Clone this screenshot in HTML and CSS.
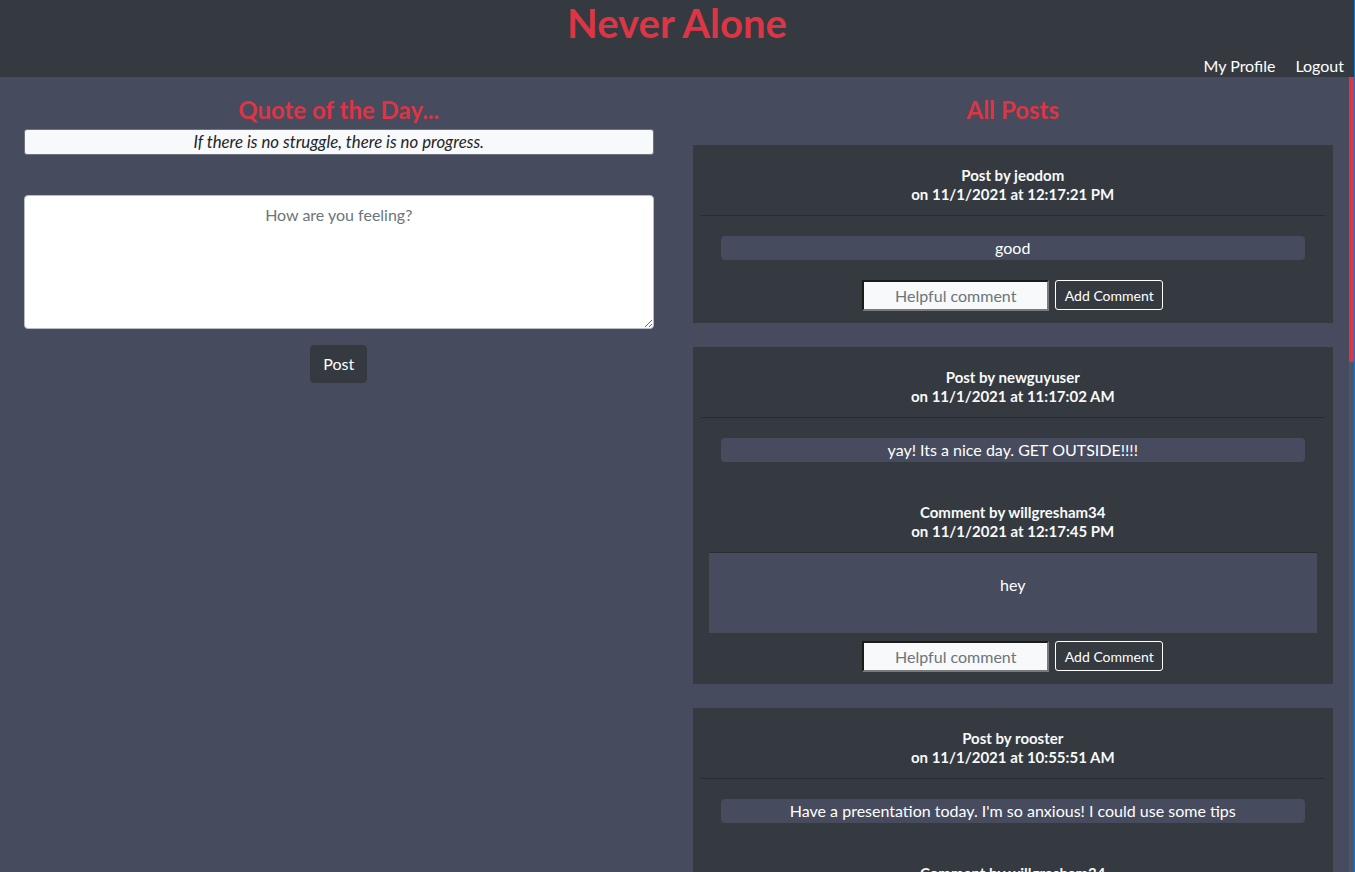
FILE: index.html
```html
<!DOCTYPE html>
<html lang="en">
<head>
<meta charset="utf-8">
<title>Never Alone</title>
<link rel="stylesheet" href="styles.css">
</head>
<body>
<header class="site-header">
  <h1 class="brand">Never Alone</h1>
  <nav class="nav">
    <a class="nav-link" href="#">My Profile</a>
    <a class="nav-link" href="#">Logout</a>
  </nav>
</header>
<div class="content-area">
<main class="main">
  <section class="col col-left">
    <h2 class="section-title">Quote of the Day...</h2>
    <div class="quote">If there is no struggle, there is no progress.</div>
    <form class="new-post">
      <textarea class="feeling" placeholder="How are you feeling?"></textarea>
      <button type="button" class="btn-post">Post</button>
    </form>
  </section>
  <section class="col col-right">
    <h2 class="section-title">All Posts</h2>
    <div class="posts">
      <article class="card">
        <div class="card-head">Post by jeodom<br>on 11/1/2021 at 12:17:21 PM</div>
        <div class="card-body">
          <p class="pill">good</p>
          <div class="comment-form">
            <input class="comment-input" type="text" placeholder="Helpful comment">
            <button type="button" class="btn-comment">Add Comment</button>
          </div>
        </div>
      </article>

      <article class="card">
        <div class="card-head">Post by newguyuser<br>on 11/1/2021 at 11:17:02 AM</div>
        <div class="card-body">
          <p class="pill">yay! Its a nice day. GET OUTSIDE!!!!</p>
          <div class="comment">
            <div class="comment-head">Comment by willgresham34<br>on 11/1/2021 at 12:17:45 PM</div>
            <div class="comment-box">hey</div>
          </div>
          <div class="comment-form">
            <input class="comment-input" type="text" placeholder="Helpful comment">
            <button type="button" class="btn-comment">Add Comment</button>
          </div>
        </div>
      </article>

      <article class="card">
        <div class="card-head">Post by rooster<br>on 11/1/2021 at 10:55:51 AM</div>
        <div class="card-body">
          <p class="pill">Have a presentation today. I'm so anxious! I could use some tips</p>
          <div class="comment">
            <div class="comment-head">Comment by willgresham34<br>on 11/1/2021 at 11:02:13 AM</div>
            <div class="comment-box">Take a deep breath and practice once more out loud. You've got this!</div>
          </div>
          <div class="comment-form">
            <input class="comment-input" type="text" placeholder="Helpful comment">
            <button type="button" class="btn-comment">Add Comment</button>
          </div>
        </div>
      </article>
    </div>
  </section>
</main>
<div class="scrollbar"><div class="scrollbar-thumb"></div></div>
</div>
</body>
</html>
```

FILE: styles.css
```css
* { box-sizing: border-box; }

html, body {
  height: 100%;
}

body {
  margin: 0;
  font-family: "Lato", "Open Sans", sans-serif;
  font-size: 16px;
  color: #ffffff;
  background: #464b5e;
  display: flex;
  flex-direction: column;
  overflow: hidden;
  border-right: 1px solid #0a78d4;
}

.site-header {
  background: #343a40;
  height: 77px;
  flex: none;
  display: flex;
  flex-direction: column;
}

.brand {
  margin: 0;
  text-align: center;
  color: #dc3545;
  font-size: 40px;
  font-weight: 700;
  line-height: 47px;
}

.nav {
  display: flex;
  justify-content: flex-end;
  gap: 20px;
  padding: 8px 10px 0 0;
  line-height: 22px;
}

.nav-link {
  color: #ffffff;
  text-decoration: none;
  font-size: 16px;
}

.content-area {
  flex: 1;
  min-height: 0;
  display: flex;
}

.main {
  flex: 1;
  min-width: 0;
  overflow: hidden;
  display: grid;
  grid-template-columns: 1fr 1fr;
  align-items: start;
}

.scrollbar {
  flex: none;
  width: 5px;
  background: #4f5467;
}

.scrollbar-thumb {
  height: 285px;
  background: #dc3545;
}

.col-left {
  padding: 18px 21px 0 24px;
}

.col-right {
  padding: 18px 16px 8px 18px;
}

.section-title {
  margin: 0;
  text-align: center;
  color: #dc3545;
  font-size: 24px;
  font-weight: 700;
  line-height: 29px;
}

.quote {
  margin-top: 5px;
  height: 26px;
  line-height: 24px;
  background: #f8f9fa;
  color: #212529;
  border: 1px solid #6c757d;
  border-radius: 3px;
  font-style: italic;
  font-size: 16.8px;
  text-align: center;
}

.new-post {
  display: flex;
  flex-direction: column;
  align-items: center;
  margin-top: 40px;
}

.feeling {
  width: 100%;
  height: 134px;
  border: 1px solid #b8bcc4;
  border-radius: 4px;
  padding: 7px 12px;
  font-family: inherit;
  font-size: 16px;
  line-height: 24px;
  text-align: center;
  color: #212529;
  background: #ffffff;
}
.feeling::placeholder {
  color: #6c757d;
}

.btn-post {
  margin-top: 16px;
  background: #343a40;
  color: #ffffff;
  border: 1px solid #343a40;
  border-radius: 4px;
  padding: 6px 12px;
  font-family: inherit;
  font-size: 16px;
  line-height: 24px;
}

.posts {
  margin-top: 21px;
  display: flex;
  flex-direction: column;
  gap: 24px;
}

.card {
  background: #343a40;
  padding: 0 8px 12px;
}

.card-head,
.comment-head {
  text-align: center;
  font-weight: 700;
  font-size: 15px;
  line-height: 19px;
  color: #f8f9fa;
}

.card-head {
  padding: 21px 0 11px;
  border-bottom: 1px solid #292d33;
}

.card-body {
  display: flex;
  flex-direction: column;
}

.pill {
  margin: 20px 20px 12px;
  background: #464b5e;
  border-radius: 4px;
  text-align: center;
  line-height: 24px;
  min-height: 24px;
}

.comment-head {
  padding: 29px 0 11px;
}

.comment-box {
  margin: 0 8px;
  height: 81px;
  border-top: 1px solid #2a2e34;
  background: #464b5e;
  text-align: center;
  padding-top: 21px;
  line-height: 22px;
}

.comment-form {
  margin-top: 8px;
  display: flex;
  justify-content: center;
  gap: 6px;
  align-items: flex-start;
}

.comment-input {
  width: 187px;
  height: 31px;
  background: #f8f9fa;
  border-style: solid;
  border-width: 2px;
  border-color: #1b1b1b #7a7a7a #7a7a7a #1b1b1b;
  font-family: inherit;
  font-size: 16px;
  text-align: center;
  padding: 1px 4px;
  color: #212529;
}
.comment-input::placeholder {
  color: #6c757d;
}

.btn-comment {
  height: 30px;
  width: 108px;
  background: transparent;
  color: #ffffff;
  border: 1px solid #ffffff;
  border-radius: 3px;
  font-family: inherit;
  font-size: 14px;
  padding: 0 6px;
}
```
